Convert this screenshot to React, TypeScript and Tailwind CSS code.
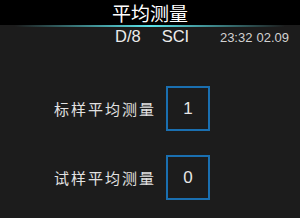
import React from "react";

const cjk = { fontFamily: '"Noto Sans CJK SC", "Liberation Sans", sans-serif' };
const lat = { fontFamily: '"Liberation Sans", Arial, sans-serif' };

function Row({ label, value }: { label: string; value: string }) {
  return (
    <div className="flex items-center pl-[54px]">
      <span className="text-[15px] tracking-[2px] text-[#e2e2e2] leading-none" style={cjk}>
        {label}
      </span>
      <div
        className="ml-[10px] w-[44px] h-[45px] border-2 border-[#1a6fb0] flex items-center justify-center text-[17px] text-[#e6e6e6]"
        style={lat}
      >
        {value}
      </div>
    </div>
  );
}

export default function App() {
  return (
    <div className="w-[300px] h-[218px] bg-[#1c1c1c] flex flex-col overflow-hidden">
      <div className="h-[25px] bg-black flex items-center justify-center">
        <span className="text-[19px] leading-none text-white" style={cjk}>
          平均测量
        </span>
      </div>
      <div className="h-[2px] bg-[linear-gradient(to_right,transparent_5%,#5be3ea_50%,transparent_95%)]" />
      <div className="flex items-baseline h-[16px] pl-[115px] pr-[11px] mt-[1px] text-[#ececec]" style={lat}>
        <span className="text-[16.5px] leading-none">D/8</span>
        <span className="ml-[21px] text-[16.5px] leading-none">SCI</span>
        <span className="ml-auto flex gap-[4px] text-[13px] leading-none text-[#d2d2d2]">
          <span>23:32</span>
          <span>02.09</span>
        </span>
      </div>
      <div className="flex flex-col gap-[24px] mt-[42px]">
        <Row label="标样平均测量" value="1" />
        <Row label="试样平均测量" value="0" />
      </div>
    </div>
  );
}
